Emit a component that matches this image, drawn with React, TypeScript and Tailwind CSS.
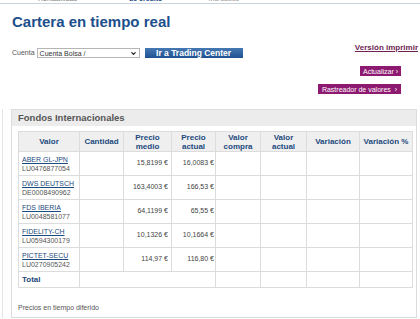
import { ChevronDown } from "lucide-react";

type Fund = { name: string; isin: string; medio: string; actual: string };

const funds: Fund[] = [
  { name: "ABER GL-JPN", isin: "LU0476877054", medio: "15,8199 €", actual: "16,0083 €" },
  { name: "DWS DEUTSCH", isin: "DE0008490962", medio: "163,4003 €", actual: "166,53 €" },
  { name: "FDS IBERIA", isin: "LU0048581077", medio: "64,1199 €", actual: "65,55 €" },
  { name: "FIDELITY-CH", isin: "LU0594300179", medio: "10,1326 €", actual: "10,1664 €" },
  { name: "PICTET-SECU", isin: "LU0270905242", medio: "114,97 €", actual: "116,80 €" },
];

const cols = [
  { label: ["Valor"], w: "w-[61px]" },
  { label: ["Cantidad"], w: "w-[44px]" },
  { label: ["Precio", "medio"], w: "w-[48px]" },
  { label: ["Precio", "actual"], w: "w-[44px]" },
  { label: ["Valor", "compra"], w: "w-[45px]" },
  { label: ["Valor", "actual"], w: "w-[46px]" },
  { label: ["Variación"], w: "w-[53px]" },
  { label: ["Variación %"], w: "w-[53px]" },
];

export default function App() {
  return (
    <div className="relative w-[420px] h-[319px] overflow-hidden bg-white font-['Liberation_Sans',Arial,sans-serif] text-[#444]">
      {/* top nav strip, only its bottom edge is in view */}
      <div className="h-[4px] overflow-hidden border-b border-[#c8d4e2]">
        <div className="flex -mt-[6px] text-[7px] leading-[9px]">
          <span className="ml-[38px] text-[#777]">Rentabilidad</span>
          <span className="ml-[52px] font-bold text-[#1d4a7e]">de crédito</span>
          <span className="ml-[46px] text-[#999]">Mercados</span>
        </div>
      </div>

      <h1 className="ml-[12px] mt-[8px] text-[15px] leading-[20px] font-bold text-[#1c4f8c]">
        Cartera en tiempo real
      </h1>

      <div className="flex justify-between mt-[11px]">
        <div className="flex items-center ml-[12px] mt-[5px] self-start">
          <span className="text-[7px] text-[#555]">Cuenta</span>
          <div className="ml-[2px] flex items-center justify-between w-[103px] h-[10px] border border-[#b5b5b5] bg-white px-[2px]">
            <span className="text-[7px] leading-none text-[#333]">Cuenta Bolsa /</span>
            <ChevronDown className="w-[7px] h-[7px] text-[#222]" strokeWidth={4} />
          </div>
          <button
            type="button"
            className="ml-[5px] w-[98px] h-[10px] flex items-center justify-center bg-gradient-to-b from-[#4678b2] to-[#1d5291] text-white text-[8.5px] font-bold leading-none"
          >
            Ir a Trading Center
          </button>
        </div>

        <div className="flex flex-col items-end">
          <a className="mr-[2px] text-[8px] leading-[10px] font-bold text-[#6e1f55] underline">Versión imprimir</a>
          <button
            type="button"
            className="mt-[13px] mr-[19px] h-[10px] px-[3px] bg-[#8d1a70] text-white text-[7px] leading-none"
          >
            Actualizar ›
          </button>
          <button
            type="button"
            className="mt-[8px] mr-[19px] h-[10px] px-[4px] bg-[#8d1a70] text-white text-[7px] leading-none"
          >
            Rastreador de valores &nbsp;›
          </button>
        </div>
      </div>

      <div className="flex mt-[15px]">
        <div className="w-[3px] border-r border-[#e4e4e4]" />
        <div className="ml-[8px] w-[406px] h-[209px] border border-[#dcdcdc] flex flex-col">
          <div className="h-[16px] bg-[#ececec] pl-[6px] flex items-center text-[9.5px] font-bold text-[#555]">
            Fondos Internacionales
          </div>

          <table className="mt-[5px] ml-[6px] w-[394px] border-collapse border border-[#dcdcdc] table-fixed">
            <thead>
              <tr className="h-[20px] bg-[#efefef]">
                {cols.map((c) => (
                  <th
                    key={c.label.join(" ")}
                    className={`${c.w} border border-[#dcdcdc] text-[8px] leading-[9px] font-bold text-[#1d4a7e] text-center align-middle`}
                  >
                    {c.label.map((l) => (
                      <div key={l}>{l}</div>
                    ))}
                  </th>
                ))}
              </tr>
            </thead>
            <tbody>
              {funds.map((f) => (
                <tr key={f.isin} className="h-[24px]">
                  <td className="border border-[#dcdcdc] pl-[3px] text-[7px] leading-[9px] align-middle">
                    <div className="text-[#1d4a7e] underline">{f.name}</div>
                    <div className="text-[#555]">{f.isin}</div>
                  </td>
                  <td className="border border-[#dcdcdc]" />
                  <td className="border border-[#dcdcdc] pr-[3px] text-right text-[7px] text-[#444]">{f.medio}</td>
                  <td className="border border-[#dcdcdc] pr-[1px] text-right text-[7px] text-[#444] whitespace-nowrap">{f.actual}</td>
                  <td className="border border-[#dcdcdc]" />
                  <td className="border border-[#dcdcdc]" />
                  <td className="border border-[#dcdcdc]" />
                  <td className="border border-[#dcdcdc]" />
                </tr>
              ))}
              <tr className="h-[16px]">
                <td className="border border-[#dcdcdc] pl-[3px] text-[8px] font-bold text-[#1d4a7e]">Total</td>
                <td className="border-y border-[#dcdcdc]" colSpan={3} />
                <td className="border border-[#dcdcdc]" />
                <td className="border border-[#dcdcdc]" />
                <td className="border border-[#dcdcdc]" />
                <td className="border border-[#dcdcdc]" />
              </tr>
            </tbody>
          </table>

          <p className="mt-[15px] ml-[6px] text-[7px] text-[#555]">Precios en tiempo diferido</p>
        </div>
      </div>
    </div>
  );
}
